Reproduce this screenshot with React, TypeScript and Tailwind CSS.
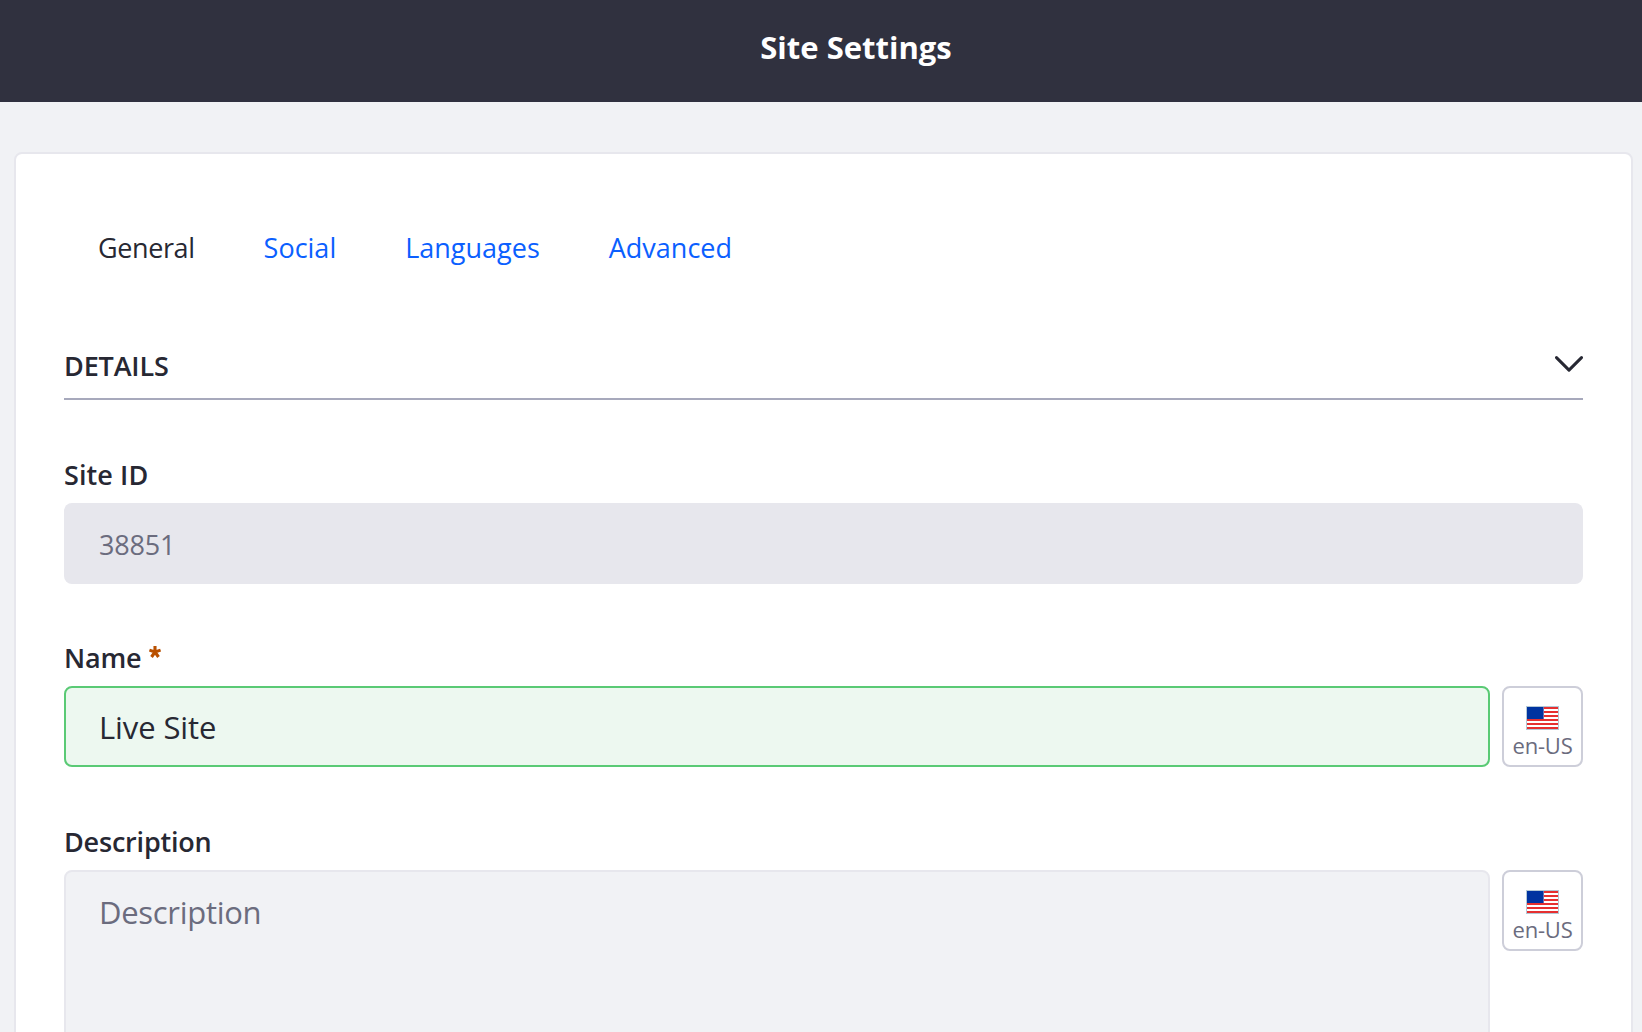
import React from 'react';

function Flag() {
  return (
    <svg className="block h-6 w-[33px] shrink-0" viewBox="0 0 33 24" shapeRendering="crispEdges" aria-hidden="true">
      <rect width="33" height="24" fill="#b4c8d6" />
      <rect x="1" y="1" width="31" height="22" fill="#fff" />
      {[1, 5, 9, 13, 17, 21].map((y) => (
        <rect key={y} x="1" y={y} width="31" height="2" fill="#e63030" />
      ))}
      <rect x="1" y="1" width="16" height="12" fill="#0033a0" />
      <rect x="17" y="1" width="1" height="12" fill="#6a6fae" />
    </svg>
  );
}

function Asterisk() {
  return (
    <svg className="ml-2 inline-block align-[10px]" width="12" height="12" viewBox="0 0 12 12" fill="none" stroke="#b95000" strokeWidth="3.1" aria-hidden="true">
      <path d="M6 6V0M6 6 .4 4.1M6 6l5.6-1.9M6 6l-3.5 5M6 6l3.5 5" />
    </svg>
  );
}

function LocaleButton() {
  return (
    <button
      type="button"
      className="flex h-[81px] w-[81px] shrink-0 flex-col items-center rounded-lg border-2 border-[#cdced9] bg-white pt-[18px]"
    >
      <Flag />
      <span className="mt-0.5 whitespace-nowrap text-[22px] leading-[26px] tracking-[-0.2px] text-[#6b6c7e]">en-US</span>
    </button>
  );
}

function Label({ children }: { children: React.ReactNode }) {
  return <label className="block h-10 text-[27px] font-semibold leading-10 tracking-[-0.2px]">{children}</label>;
}

export default function App() {
  return (
    <div className="h-[1032px] w-full overflow-hidden bg-[#f1f2f5] font-['Open_Sans',sans-serif] text-[#272833]">
      <header className="flex h-[102px] items-center justify-center bg-[#30313f] pb-[9px] pl-[70px]">
        <h1 className="text-[31px] font-bold leading-10 text-white">Site Settings</h1>
      </header>
      <main className="ml-[14px] mr-[9px] mt-[50px] h-[1000px] rounded-lg border-2 border-[#e7e7ed] bg-white px-12 pt-[74px]">
        <nav className="flex h-10 gap-[69px] pl-[34px] text-[27px] leading-10">
          <a className="whitespace-nowrap tracking-[-0.4px]">General</a>
          <a className="whitespace-nowrap text-[#0b5fff]">Social</a>
          <a className="whitespace-nowrap text-[#0b5fff]">Languages</a>
          <a className="whitespace-nowrap text-[#0b5fff]">Advanced</a>
        </nav>
        <section className="mt-[78px]">
          <div className="flex h-[54px] justify-between border-b-2 border-[#a7a9bc]">
            <h2 className="text-[27px] font-semibold leading-10 tracking-[-0.15px]">DETAILS</h2>
            <svg className="mt-[10px]" width="28" height="16" viewBox="0 0 28 16" fill="none" stroke="#272833" strokeWidth="3" strokeLinecap="round" strokeLinejoin="round" aria-hidden="true">
              <path d="M1.5 1.6 14 14.1 26.5 1.6" />
            </svg>
          </div>
          <div className="mt-[55px]">
            <Label><span className="tracking-[0.1px]">Site ID</span></Label>
            <div className="mt-2 flex h-[81px] items-center rounded-lg bg-[#e7e7ed] pl-[35px] pt-[3px] text-[27px] tracking-[-0.2px] text-[#6b6c7e]">
              38851
            </div>
          </div>
          <div className="mt-[54px]">
            <Label>
              Name<Asterisk />
            </Label>
            <div className="mt-2 flex gap-3">
              <div className="flex h-[81px] flex-1 items-center rounded-lg border-2 border-[#5aca75] bg-[#edf8f0] pl-[33px] pt-0.5 text-[31px] tracking-[-0.1px]">
                Live Site
              </div>
              <LocaleButton />
            </div>
          </div>
          <div className="mt-[55px]">
            <Label>Description</Label>
            <div className="mt-2 flex gap-3">
              <div className="h-[240px] flex-1 rounded-lg border-2 border-[#e7e7ed] bg-[#f1f2f5] pl-[33px] pt-5 text-[31px] leading-10 tracking-[-0.3px] text-[#6b6c7e]">
                Description
              </div>
              <LocaleButton />
            </div>
          </div>
        </section>
      </main>
    </div>
  );
}
